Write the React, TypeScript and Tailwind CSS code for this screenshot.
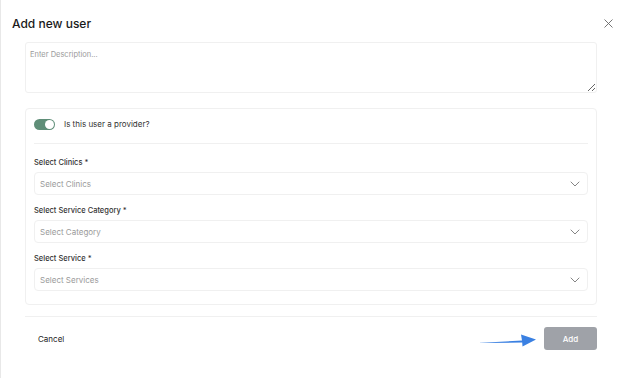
import { useState } from "react";

const fields = [
  { label: "Select Clinics *", placeholder: "Select Clinics" },
  { label: "Select Service Category *", placeholder: "Select Category" },
  { label: "Select Service *", placeholder: "Select Services" },
];

function Chevron() {
  return (
    <svg width="10" height="6" viewBox="0 0 10 6" fill="none">
      <path d="M1 1l4 4 4-4" stroke="#777" strokeWidth="0.9" strokeLinecap="round" strokeLinejoin="round" />
    </svg>
  );
}

function SelectField({ label, placeholder }: { label: string; placeholder: string }) {
  return (
    <div className="flex flex-col">
      <label className="text-[7.5px] leading-[9px] font-medium text-[#333]">{label}</label>
      <button className="mt-[5px] h-[23px] flex items-center justify-between pl-[5px] pr-[7px] border border-[#f0f0f0] rounded-[4px] bg-white">
        <span className="text-[8px] text-[#9a9a9a]">{placeholder}</span>
        <Chevron />
      </button>
    </div>
  );
}

export default function App() {
  const [isProvider, setIsProvider] = useState(true);

  return (
    <div
      className="w-[624px] h-[378px] bg-white border-l border-[#e8e8e8] overflow-hidden"
      style={{ fontFamily: "Inter, 'Noto Sans', sans-serif" }}
    >
      {/* Header */}
      <div className="flex items-center justify-between pl-[11px] pr-[11px] pt-[16px] h-[31px]">
        <h1 className="text-[12px] leading-[15px] font-medium text-[#1a1a1a]">Add new user</h1>
        <svg width="9" height="9" viewBox="0 0 9 9" fill="none">
          <path d="M0.5 0.5l8 8M8.5 0.5l-8 8" stroke="#666" strokeWidth="0.9" />
        </svg>
      </div>

      <div className="pl-[24px] pr-[27px] pt-[11px]">
        {/* Description */}
        <textarea
          placeholder="Enter Description..."
          className="block w-full h-[51px] border border-[#f0f0f0] rounded-[3px] px-[4px] pt-[7px] pb-[5px] text-[7.5px] leading-[9px] text-[#333] placeholder:text-[#9a9a9a] outline-none"
        />

        {/* Provider card */}
        <div className="mt-[15px] border border-[#f0f0f0] rounded-[4px] pl-[8px] pr-[8px] pt-[9px] pb-[13px]">
          <div className="flex items-center gap-[9px] pb-[13px] border-b border-[#f0f0f0]">
            <button
              onClick={() => setIsProvider(!isProvider)}
              className={`w-[21px] h-[11px] rounded-full flex items-center px-[1px] ${
                isProvider ? "bg-[#5f8e78] justify-end" : "bg-gray-300 justify-start"
              }`}
            >
              <span className="w-[9px] h-[9px] rounded-full bg-white" />
            </button>
            <span className="text-[8px] text-[#333]">Is this user a provider?</span>
          </div>

          <div className="mt-[14px] flex flex-col gap-[11px]">
            {fields.map((f) => (
              <SelectField key={f.label} label={f.label} placeholder={f.placeholder} />
            ))}
          </div>
        </div>

        {/* Footer */}
        <div className="mt-[11px] border-t border-[#f0f0f0] pt-[10px] flex items-center justify-between">
          <button className="ml-[13px] text-[8px] text-[#222]">Cancel</button>
          <div className="flex items-center">
            <svg width="60" height="16" viewBox="0 0 60 16" className="mr-[7px] mt-[2px]">
              <path d="M0 11 L45 8.6 L44 2.5 L59 7.6 L45.5 14.5 L45.2 10.6 Z" fill="#3a80e2" />
            </svg>
            <button className="w-[53px] h-[23px] rounded-[3px] bg-[#9fa2a8] text-white text-[8px] font-medium">
              Add
            </button>
          </div>
        </div>
      </div>
    </div>
  );
}
